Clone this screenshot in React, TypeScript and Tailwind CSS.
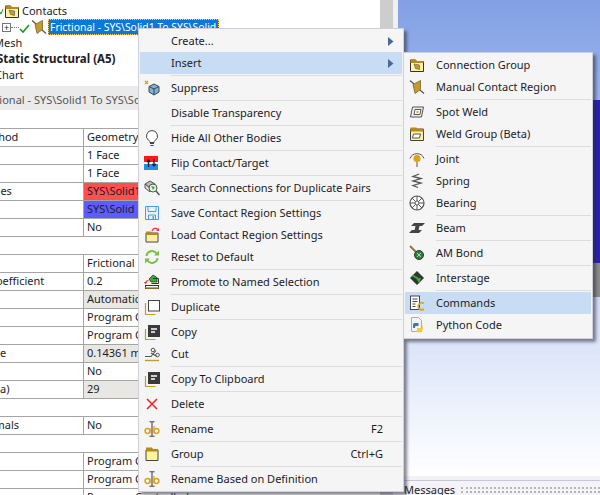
import React from 'react';

// --- icons, all 16x16 unless noted ---
const Svg = ({ children, s = 16 }: { children: React.ReactNode; s?: number }) => (
  <svg width={s} height={s} viewBox="0 0 16 16" fill="none" className="block shrink-0">
    {children}
  </svg>
);

const ContactGlyph = () => (
  <>
    <path d="M1 1.500L5 5M11 11l4 3.500" stroke="#555" strokeWidth="1.200" />
    <path d="M4 5.500L11.500 1.500V10.500L6 14.500Z" fill="#c49a2c" stroke="#6b5a20" strokeWidth=".7" />
  </>
);

const FolderContact = () => (
  <Svg>
    <path d="M1.500 3h5l1 1.500h7v10h-13z" fill="#fdf3a0" stroke="#333" />
    <path d="M1.500 2.500h5l1 1.500h7v2h-13z" fill="#b8891c" />
    <path d="M5 7l5.500 1v4.500l-4-1z" fill="#c49a2c" stroke="#555" strokeWidth=".6" />
  </Svg>
);

const Folder = () => (
  <Svg>
    <path d="M2 4h12v10.500H2z" fill="#fdf3a0" stroke="#444" />
    <path d="M2 1.500h6l1 1.500h5v2.500H2z" fill="#b8891c" />
  </Svg>
);

const Suppress = () => (
  <Svg>
    <path d="M1 1l3 3M4 1L1 4" stroke="#d9a520" strokeWidth="1.400" />
    <path d="M10 4l5 2.500V12l-5 3-5-3V6.500z" fill="#7fb2dd" stroke="#444" />
    <path d="M5 6.500l5 2.500 5-2.500M10 9v6" stroke="#444" />
  </Svg>
);

const Bulb = () => (
  <Svg>
    <path d="M8 .5a5.500 5.500 0 0 0-3.200 10c.7.6 1.200 1.200 1.200 2h4c0-.8.500-1.400 1.200-2A5.500 5.500 0 0 0 8 .5z" fill="#fff" stroke="#444" />
    <path d="M6 13.500h4M6.500 15.500h3" stroke="#444" strokeWidth="1.200" />
  </Svg>
);

const Flip = () => (
  <Svg>
    <rect x="0" y="1" width="14" height="6" fill="#ff1a1a" />
    <rect x="0" y="9" width="14" height="6" fill="#1e90e8" />
    <path d="M4.500 12V5M2.800 7l1.700-2 1.700 2M10 4v7M8.300 9l1.700 2 1.700-2" stroke="#222" strokeWidth="1.300" />
  </Svg>
);

const SearchDup = () => (
  <Svg>
    <path d="M1 4l5-3 5 3-5 4z" fill="#bbb" stroke="#555" />
    <path d="M1 4v4l5 4V8z" fill="#ddd" stroke="#555" />
    <circle cx="9" cy="8" r="4" fill="#e8f5e0" stroke="#555" />
    <path d="M7 6l4 1-2 3z" fill="#2db52d" />
    <path d="M12 11l3.500 4" stroke="#555" strokeWidth="1.500" />
  </Svg>
);

const Floppy = () => (
  <Svg>
    <path d="M1.500 1.500h13v13h-13z" fill="#eaf3fc" stroke="#4a9be8" />
    <path d="M4 1.500v5h8v-5M4.500 14.500v-4.500h7v4.500" stroke="#4a9be8" />
    <rect x="8.500" y="11" width="1.500" height="3" fill="#4a9be8" />
  </Svg>
);

const LoadFolder = () => (
  <Svg>
    <path d="M2 6h12v9H2z" fill="#fdf0a0" stroke="#444" />
    <path d="M2 4.500h5l1 1.500h6v2H2z" fill="#b8891c" />
    <path d="M8 4c1-3 4-3.500 6-1.500" stroke="#e63232" strokeWidth="1.200" />
    <path d="M15 1v3h-3z" fill="#e63232" />
  </Svg>
);

const Reset = () => (
  <Svg>
    <path d="M2.500 7a5.500 5.500 0 0 1 10-2.500" stroke="#7ac143" strokeWidth="2" />
    <path d="M13.500 9a5.500 5.500 0 0 1-10 2.500" stroke="#7ac143" strokeWidth="2" />
    <path d="M15 1.500v5h-5zM1 14.500v-5h5z" fill="#7ac143" />
  </Svg>
);

const Promote = () => (
  <Svg>
    <path d="M5 5l4-4 4 2.500v4.500H7z" fill="#35b035" stroke="#222" strokeWidth=".7" />
    <path d="M9 4.500h5.500v5h-7" stroke="#333" />
    <rect x="1.500" y="11.500" width="13" height="3" fill="#fff" stroke="#333" />
    <rect x="1.500" y="13" width="13" height="1.500" fill="#d9a520" />
    <path d="M1.500 9.500a3 3 0 0 1 3-3" stroke="#e63232" strokeWidth="1.200" />
    <path d="M0 8h3l-1.500 2.500z" fill="#e63232" />
  </Svg>
);

const Duplicate = () => (
  <Svg>
    <path d="M1.500 4v11.500h10" stroke="#c79a2c" strokeWidth="1.200" />
    <rect x="4.500" y="1.500" width="11" height="10.500" fill="#fff" stroke="#444" />
  </Svg>
);

const Copy = () => (
  <Svg>
    <path d="M1.500 5v10.500h10" stroke="#c79a2c" strokeWidth="1.200" />
    <rect x="4" y="1" width="12" height="12" fill="#3a3a3a" />
    <path d="M7 5h6M7 8h4" stroke="#fff" strokeWidth="1.300" />
  </Svg>
);

const Cut = () => (
  <Svg>
    <path d="M1 14.500h14" stroke="#c79a2c" strokeWidth="1.400" />
    <path d="M1 10.500h6l5-6M7 7l6 3.500" stroke="#555" strokeWidth="1.100" />
    <circle cx="9" cy="4" r="1.800" stroke="#555" />
    <circle cx="13.500" cy="9" r="1.800" stroke="#555" />
  </Svg>
);

const Delete = () => (
  <Svg>
    <path d="M3 3l10 10M13 3L3 13" stroke="#ee2222" strokeWidth="1.500" />
  </Svg>
);

const Rename = () => (
  <Svg>
    <path d="M5.500 .8h5M5.500 15.200h5M8 1v14" stroke="#444" strokeWidth="1.100" />
    <circle cx="3.500" cy="10" r="2.400" stroke="#d9a520" strokeWidth="1.500" />
    <path d="M6 7.500v5" stroke="#d9a520" strokeWidth="1.300" />
    <circle cx="12.500" cy="10" r="2.400" stroke="#d9a520" strokeWidth="1.500" />
    <path d="M10 5v7.500" stroke="#d9a520" strokeWidth="1.300" />
  </Svg>
);

const SpotWeld = () => (
  <Svg>
    <path d="M3.500 3h11l-2 10H1.500z" fill="#eee" stroke="#555" />
    <path d="M6 5.500h6l-1 5H5z" fill="#fff" stroke="#555" />
    <rect x="7.500" y="7" width="2" height="2" fill="#d9a520" />
  </Svg>
);

const WeldGroup = () => (
  <Svg>
    <path d="M1.500 3h13v11.500h-13z" fill="#fdf3a0" stroke="#444" />
    <path d="M1.500 1.500h6l1 1.500h6v2.500h-13z" fill="#b8891c" />
    <path d="M4.500 8h7l-1 4h-7z" fill="#fff" stroke="#555" />
  </Svg>
);

const Joint = () => (
  <Svg>
    <path d="M1 7.500a7.500 7.500 0 0 1 14 0" stroke="#555" />
    <circle cx="8" cy="7.500" r="3.500" fill="#e0a010" />
    <path d="M8 11v5" stroke="#555" />
  </Svg>
);

const Spring = () => (
  <Svg>
    <path d="M10 1L4 3.500l8 2-8 2.500 8 2-8 2.500 5 2" stroke="#555" strokeWidth="1.300" />
  </Svg>
);

const Bearing = () => (
  <Svg>
    <circle cx="8" cy="8" r="7" fill="#fff" stroke="#555" strokeWidth="1.200" />
    <circle cx="8" cy="8" r="2" stroke="#555" />
    <path d="M8 1v5M8 10v5M1 8h5M10 8h5M3 3l3.500 3.500M9.500 9.500L13 13M13 3L9.500 6.500M6.500 9.500L3 13" stroke="#555" />
  </Svg>
);

const Beam = () => (
  <Svg>
    <path d="M5 3h11l-3 3H2zM6.500 6h4l-1 4.500h-4zM3 10h10l-3 3H0z" fill="#444" />
  </Svg>
);

const AMBond = () => (
  <Svg>
    <path d="M1 1l7 7" stroke="#8a7a40" strokeWidth="2" />
    <circle cx="10" cy="10" r="4.500" fill="#2f7d3a" stroke="#333" />
    <path d="M8 8l4 4M12 8l-4 4" stroke="#9be39b" />
  </Svg>
);

const Interstage = () => (
  <Svg>
    <path d="M8 1l7 7-7 7-7-7z" fill="#333" />
    <path d="M3.500 5.500L8 8l2 3 1-3" stroke="#2db52d" strokeWidth="2" />
  </Svg>
);

const Commands = () => (
  <Svg>
    <rect x="1.500" y="1" width="9" height="13.500" fill="#fff" stroke="#444" />
    <path d="M3.500 4h5M3.500 6.500h5M3.500 9h3M3.500 11.500h3" stroke="#444" />
    <path d="M15 8.500a3.500 3.500 0 1 0 0 5.500" stroke="#d9a520" strokeWidth="1.600" />
  </Svg>
);

const Python = () => (
  <Svg>
    <path d="M2.500 .5h7l3 3v11h-10z" fill="#f4f4f4" stroke="#aaa" />
    <path d="M4 8c0-2 1.500-2 3-2h2.500v3H7c-1 0-1 1-1 2H4z" fill="#3c78b0" />
    <path d="M13 8c0 3-1 3-3 3H8v4c3 1 4.500 0 4.500-1.500 2-.5 2-3 .5-5.500z" fill="#f5c93a" />
  </Svg>
);

type Item = { label: string; icon?: React.ReactNode; hi?: boolean; shortcut?: string; arrow?: boolean; sep?: boolean };

const mainItems: Item[] = [
  { label: 'Create...', arrow: true },
  { label: 'Insert', arrow: true, hi: true, sep: true },
  { label: 'Suppress', icon: <Suppress />, sep: true },
  { label: 'Disable Transparency', sep: true },
  { label: 'Hide All Other Bodies', icon: <Bulb />, sep: true },
  { label: 'Flip Contact/Target', icon: <Flip />, sep: true },
  { label: 'Search Connections for Duplicate Pairs', icon: <SearchDup />, sep: true },
  { label: 'Save Contact Region Settings', icon: <Floppy /> },
  { label: 'Load Contact Region Settings', icon: <LoadFolder /> },
  { label: 'Reset to Default', icon: <Reset />, sep: true },
  { label: 'Promote to Named Selection', icon: <Promote />, sep: true },
  { label: 'Duplicate', icon: <Duplicate />, sep: true },
  { label: 'Copy', icon: <Copy /> },
  { label: 'Cut', icon: <Cut />, sep: true },
  { label: 'Copy To Clipboard', icon: <Copy />, sep: true },
  { label: 'Delete', icon: <Delete />, sep: true },
  { label: 'Rename', icon: <Rename />, shortcut: 'F2', sep: true },
  { label: 'Group', icon: <Folder />, shortcut: 'Ctrl+G', sep: true },
  { label: 'Rename Based on Definition', icon: <Rename /> },
];

const subItems: Item[] = [
  { label: 'Connection Group', icon: <FolderContact /> },
  { label: 'Manual Contact Region', icon: <Svg><ContactGlyph /></Svg>, sep: true },
  { label: 'Spot Weld', icon: <SpotWeld /> },
  { label: 'Weld Group (Beta)', icon: <WeldGroup />, sep: true },
  { label: 'Joint', icon: <Joint /> },
  { label: 'Spring', icon: <Spring /> },
  { label: 'Bearing', icon: <Bearing />, sep: true },
  { label: 'Beam', icon: <Beam />, sep: true },
  { label: 'AM Bond', icon: <AMBond />, sep: true },
  { label: 'Interstage', icon: <Interstage />, sep: true },
  { label: 'Commands', icon: <Commands />, hi: true },
  { label: 'Python Code', icon: <Python /> },
];

const Arrow = () => (
  <svg width="6" height="9" viewBox="0 0 6 9" className="block">
    <path d="M0 0l5.500 4.500L0 9z" fill="#4a6a94" />
  </svg>
);

const MenuRows = ({ items }: { items: Item[] }) => (
  <>
    {items.map((it) => (
      <React.Fragment key={it.label}>
        <div className={`flex h-[22px] items-center ${it.hi ? 'bg-[#c8dcf3]' : ''}`}>
          <div className="flex w-[31px] shrink-0 justify-start pl-[4px]">{it.icon}</div>
          <span className="flex-1 whitespace-nowrap">{it.label}</span>
          {it.shortcut && <span className="mr-[19px]">{it.shortcut}</span>}
          {it.arrow && <span className="mr-[8px]"><Arrow /></span>}
        </div>
        {it.sep && (
          <div className="flex h-[3px] items-center">
            <div className="w-[31px] shrink-0" />
            <div className="h-px flex-1 bg-[#dcdcdc]" />
          </div>
        )}
      </React.Fragment>
    ))}
  </>
);

type Row = { label?: string; labelCls?: string; value?: string; cellCls?: string };

const rows: Row[] = [
  {},
  { label: 'Method', labelCls: '-ml-[22px]', value: 'Geometry Selection' },
  { value: '1 Face' },
  { value: '1 Face' },
  { label: 'Bodies', labelCls: '-ml-[23px]', value: 'SYS\\Solid1', cellCls: 'bg-[#ff5050]' },
  { value: 'SYS\\Solid', cellCls: 'bg-[#5c5cff]' },
  { value: 'No' },
  {},
  { value: 'Frictional' },
  { label: 'Coefficient', labelCls: '-ml-[11px]', value: '0.2' },
  { value: 'Automatic', cellCls: 'bg-[#e8e7e3]' },
  { value: 'Program Controlled' },
  { value: 'Program Controlled' },
  { label: 'e', value: '0.14361 mm', cellCls: 'bg-[#e8e7e3]' },
  { value: 'No' },
  { label: 'a)', value: '29', cellCls: 'bg-[#e8e7e3]' },
  {},
  { label: 'Normals', labelCls: '-ml-[25px]', value: 'No' },
  {},
  { value: 'Program Controlled' },
  { value: 'Program Controlled' },
  { value: 'Program Controlled' },
];

const DetailsTable = () => (
  <div className="flex shrink-0 flex-col pt-px">
    {rows.map((r, i) => (
      <div key={i} className="flex h-[18px] shrink-0 border-b border-[#a5a5a5]">
        {r.value ? (
          <>
            <div className="w-[84px] shrink-0 overflow-hidden whitespace-nowrap border-r border-[#a5a5a5] leading-[16px]">
              {r.label && <span className={`block ${r.labelCls ?? ''}`}>{r.label}</span>}
            </div>
            <div className={`flex-1 whitespace-nowrap pl-[3px] leading-[16px] ${r.cellCls ?? ''}`}>{r.value}</div>
          </>
        ) : null}
      </div>
    ))}
  </div>
);

const Tree = () => (
  <div className="flex h-[86px] shrink-0 flex-col overflow-hidden bg-white pt-[3px]">
    <div className="flex h-[16px] items-center">
      <svg width="3" height="8" viewBox="0 0 3 8" className="block"><path d="M0 5l1 2 2-5" stroke="#1a9a1a" fill="none" /></svg>
      <span className="ml-[1px]"><FolderContact /></span>
      <span className="ml-[2px]">Contacts</span>
    </div>
    <div className="flex h-[16px] items-center">
      <div className="ml-[2px] flex h-[9px] w-[9px] items-center justify-center border border-[#777] bg-white text-[9px] leading-none">+</div>
      <div className="w-[8px] border-t border-dotted border-[#777]" />
      <svg width="11" height="10" viewBox="0 0 11 10" className="mt-[4px] block"><path d="M1 5l3 3 6-7" stroke="#1a9a1a" strokeWidth="1.600" fill="none" /></svg>
      <span className="ml-[1px]"><Svg><ContactGlyph /></Svg></span>
      <span className="ml-[1px] h-[16px] whitespace-nowrap border border-dotted border-[#ffcf60] bg-[#0a78d7] pl-[1px] pr-[2px] text-[10.4px] leading-[14px] text-white">
        Frictional - SYS\Solid1 To SYS\Solid
      </span>
    </div>
    <div className="h-[16px] -ml-[6px] leading-[16px]">Mesh</div>
    <div className="h-[16px] -ml-[3px] whitespace-nowrap text-[11.5px] font-bold leading-[16px]">Static Structural (A5)</div>
    <div className="h-[16px] -ml-[5px] leading-[16px]">Chart</div>
  </div>
);

export default function App() {
  return (
    <div
      className="relative flex h-[495px] w-[600px] overflow-hidden bg-white text-[11px] text-[#1c1c28]"
      style={{ fontFamily: "'Noto Sans', 'Open Sans', sans-serif" }}
    >
      {/* left panel: tree + details */}
      <div className="flex h-full w-[380px] shrink-0 flex-col overflow-hidden">
        <Tree />
        <div className="h-[24px] shrink-0 overflow-hidden whitespace-nowrap bg-[#ebebeb] pt-[6px] leading-[16px] text-[#555]">
          <span className="block -ml-[23px]">Frictional - SYS\Solid1 To SYS\Solid</span>
        </div>
        <DetailsTable />
      </div>

      {/* scrollbar and splitter */}
      <div className="h-full w-[13px] shrink-0 bg-[#cdcdcd]" />
      <div className="h-full w-[5px] shrink-0 bg-[#f0f0f0]" />

      {/* graphics viewport */}
      <div className="flex h-full flex-1 flex-col">
        <div className="flex-1 overflow-hidden bg-gradient-to-b from-[#82a0e4] to-white">
          <div className="ml-auto mt-[100px] h-[163px] w-[10px] bg-[#2622b4]" />
          <div className="ml-auto h-[34px] w-[10px] bg-[#8c8c8c]" />
        </div>
        <div className="h-[4px] shrink-0 bg-[#f2f2f6]" />
        <div className="flex h-[15px] shrink-0 items-center gap-[6px] overflow-hidden border-t border-[#c6c6da] bg-[#f3f3f8] pl-[6px]">
          <span className="whitespace-nowrap pt-[3px] text-[11px] leading-[14px]">Messages</span>
          <div className="mt-[3px] h-[6px] flex-1 border-y-2 border-dotted border-[#b5b5b5]" />
        </div>
      </div>

      {/* context menu */}
      <div className="absolute left-[138px] top-[28px] h-[464px] w-[266px] border border-[#d0d0d8] bg-[#f5f5f5] p-px shadow-[3px_3px_3px_rgba(40,40,60,0.55)]">
        <MenuRows items={mainItems} />
      </div>

      {/* Insert submenu */}
      <div className="absolute left-[403px] top-[52px] h-[287px] w-[190px] border border-[#d0d0d8] bg-[#f5f5f5] p-px shadow-[3px_3px_3px_rgba(40,40,60,0.55)]">
        <MenuRows items={subItems} />
      </div>
    </div>
  );
}
